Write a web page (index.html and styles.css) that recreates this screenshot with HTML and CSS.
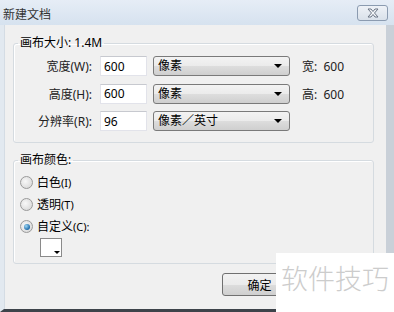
FILE: index.html
```html
<!DOCTYPE html>
<html lang="zh-CN">
<head>
    <meta charset="UTF-8">
    <title>新建文档</title>
    <link rel="stylesheet" href="styles.css">
</head>
<body>
    <div class="window">
        <div class="titlebar">
            <span class="title">新建文档</span>
            <button class="close" type="button">
                <svg width="16" height="10" viewBox="0 0 16 10">
                    <path d="M3 1 L6 1 L8 3.5 L10 1 L13 1 L9.5 5 L13 9 L10 9 L8 6.5 L6 9 L3 9 L6.5 5 Z" fill="#f4f6f9" stroke="#6b7584" stroke-width="1" stroke-linejoin="round"/>
                </svg>
            </button>
        </div>

        <div class="frame">
            <fieldset class="group">
                <legend>画布大小: 1.4M</legend>
                <div class="size-grid">
                    <label for="w">宽度(W):</label>
                    <input id="w" type="text" value="600">
                    <div class="select">像素<span class="arrow"></span></div>
                    <span class="info">宽:&nbsp; 600</span>

                    <label for="h">高度(H):</label>
                    <input id="h" type="text" value="600">
                    <div class="select">像素<span class="arrow"></span></div>
                    <span class="info">高:&nbsp; 600</span>

                    <label for="r">分辨率(R):</label>
                    <input id="r" type="text" value="96">
                    <div class="select">像素／英寸<span class="arrow"></span></div>
                    <span class="info"></span>
                </div>
            </fieldset>

            <fieldset class="group color">
                <legend>画布颜色:</legend>
                <div class="radios">
                    <div class="radio"><span class="dot"></span><span>白色<small>(I)</small></span></div>
                    <div class="radio"><span class="dot"></span><span>透明<small>(T)</small></span></div>
                    <div class="radio"><span class="dot checked"></span><span>自定义<small>(C):</small></span></div>
                </div>
                <div class="swatch"><span class="arrow small"></span></div>
            </fieldset>

            <div class="actions">
                <button class="btn" type="button">确定</button>
            </div>
        </div>

        <div class="watermark">软件技巧</div>
    </div>
</body>
</html>
```

FILE: styles.css
```css
body {
    margin: 0;
    font-family: "Noto Sans", "Noto Sans CJK SC", sans-serif;
    font-size: 12px;
    color: #000;
    background: #f0f0f0;
}
.window {
    position: relative;
    width: 394px;
    height: 312px;
    background: #f0f0f0;
    overflow: hidden;
}
.titlebar {
    height: 25px;
    padding: 0 6px 0 3px;
    display: flex;
    align-items: center;
    justify-content: space-between;
    background: linear-gradient(#e6edf6, #d6e2ef);
    box-sizing: border-box;
}
.title {
    color: #333;
    font-size: 12px;
    padding-top: 2px;
}
.close {
    width: 31px;
    height: 16px;
    margin-top: 1px;
    padding: 0;
    display: flex;
    align-items: center;
    justify-content: center;
    border: 1px solid #8b9bb0;
    border-radius: 3px;
    background: linear-gradient(#eef2f7, #d9e1ea);
}
.frame {
    height: 287px;
    box-sizing: border-box;
    padding: 11px 0 0 9px;
    border-left: 4px solid #e2e9f0;
    border-right: 8px solid #c9d0d8;
    border-bottom: 3px solid #3d434a;
    box-shadow: inset 1px 0 0 #d4dce4;
}
.group {
    margin: 0;
    padding: 0;
    width: 361px;
    box-sizing: border-box;
    border: 1px solid #d5dbe0;
    border-radius: 3px;
    box-shadow: inset 1px 1px 0 #fff;
}
.group legend {
    margin-left: 4px;
    padding: 0 2px;
    line-height: 14px;
}
.size-grid {
    display: grid;
    grid-template-columns: 78px 47px 137px auto;
    grid-auto-rows: 20px;
    column-gap: 7px;
    row-gap: 7.5px;
    align-items: center;
    padding: 6px 0 11px 0;
}
.size-grid label {
    text-align: right;
    color: #222;
}
.size-grid input {
    width: 47px;
    height: 20px;
    box-sizing: border-box;
    margin: 0 0 0 1px;
    padding: 0 0 0 3px;
    font: inherit;
    border: 1px solid #e2e3ea;
    border-top-color: #c7c9cf;
    background: #fff;
}
.select {
    position: relative;
    height: 20px;
    box-sizing: border-box;
    padding-left: 4px;
    line-height: 18px;
    border: 1px solid #7a7a7a;
    border-radius: 3px;
    background: linear-gradient(#f3f3f3, #ebebeb 50%, #dddddd 51%, #cfcfcf);
}
.arrow {
    position: absolute;
    right: 7px;
    top: 7px;
    border-left: 4px solid transparent;
    border-right: 4px solid transparent;
    border-top: 4px solid #000;
}
.info {
    padding-left: 5px;
    color: #222;
}
.color {
    margin-top: 10px;
    height: 111px;
}
.radios {
    display: flex;
    flex-direction: column;
    gap: 7px;
    padding: 8px 0 0 6px;
}
.radio {
    display: flex;
    align-items: center;
    gap: 4px;
    height: 15px;
    line-height: 15px;
}
.radio small {
    font-size: 11px;
}
.dot {
    width: 11px;
    height: 11px;
    border-radius: 50%;
    border: 1px solid #9a9a9a;
    background: radial-gradient(circle at 40% 40%, #f8f8f8, #d2d2d2);
    position: relative;
}
.dot.checked::after {
    content: "";
    position: absolute;
    left: 2.5px;
    top: 2.5px;
    width: 6px;
    height: 6px;
    border-radius: 50%;
    background: radial-gradient(circle at 35% 35%, #9fd8f5, #1e6aa8 70%);
}
.swatch {
    position: relative;
    width: 22px;
    height: 19px;
    margin: 4px 0 0 26px;
    background: #fff;
    border: 1px solid #8a8a8a;
    box-sizing: border-box;
}
.arrow.small {
    right: 1px;
    top: auto;
    bottom: 2px;
    border-left-width: 3px;
    border-right-width: 3px;
    border-top-width: 3px;
}
.actions {
    padding: 9px 0 0 209px;
}
.btn {
    width: 75px;
    height: 23px;
    padding: 0;
    font: inherit;
    border: 1px solid #707070;
    border-radius: 3px;
    background: linear-gradient(#f2f2f2, #ebebeb 50%, #dddddd 51%, #cfcfcf);
}
.watermark {
    position: absolute;
    left: 276px;
    top: 253px;
    width: 118px;
    height: 59px;
    padding: 10px 0 0 5px;
    box-sizing: border-box;
    background: #fff;
    color: #cccccc;
    font-family: "Noto Sans CJK SC", sans-serif;
    font-weight: 300;
    font-size: 27px;
    line-height: 30px;
    white-space: nowrap;
}
```
